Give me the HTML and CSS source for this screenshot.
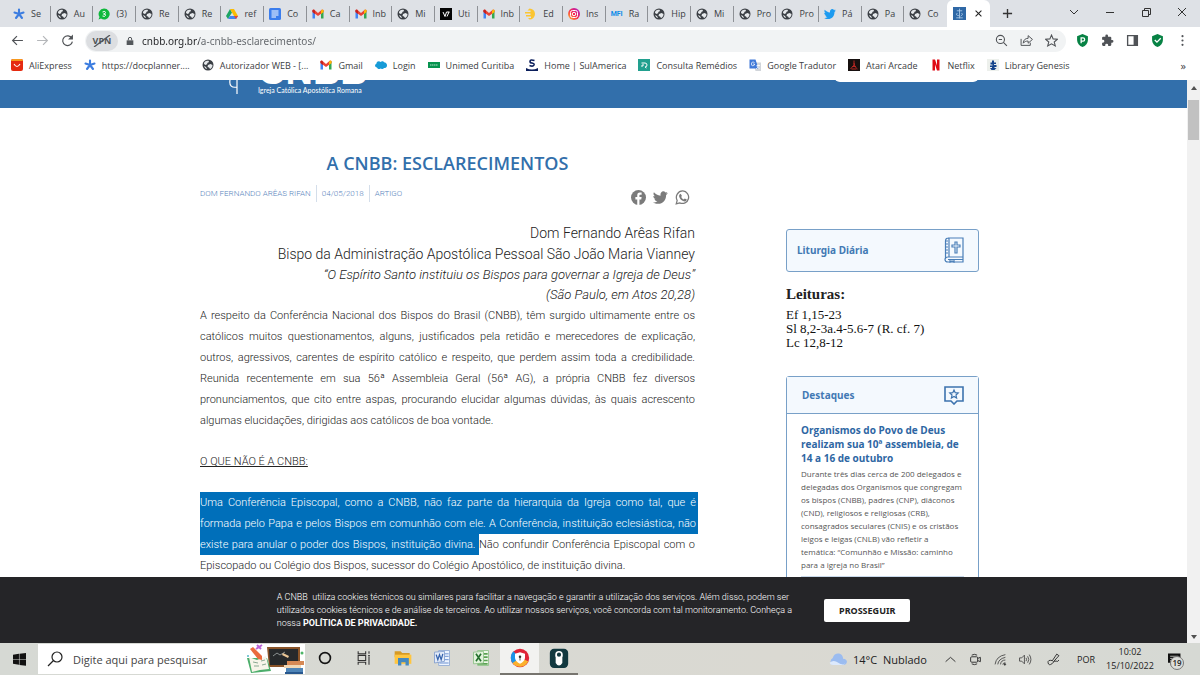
FILE: index.html
```html
<!DOCTYPE html>
<html lang="pt-BR">
<head>
<meta charset="utf-8">
<meta name="viewport" content="width=device-width, initial-scale=1">
<title>A CNBB: Esclarecimentos</title>
<link rel="stylesheet" href="styles.css">
</head>
<body>
<svg class="sprite" aria-hidden="true">
  <symbol id="doc" viewBox="0 0 24 24"><g stroke="#3c7de0" stroke-width="4.2" stroke-linecap="round"><path d="M12 12V3M12 12l9-3M12 12l6 8M12 12l-6 8M12 12L3 9"/></g></symbol>
  <symbol id="globe" viewBox="0 0 24 24"><circle cx="12" cy="12" r="11" fill="#3b3f45"/><path d="M6 5c3-1 4-2 8-1l-1 3-3 1 1 2-4 2-3-2c0-2 1-4 2-5zM12 12l5-2 4 2c0 4-2 7-5 8l-2-3-3-1zM4 14l4 2 2 4c-3 0-5-3-6-6z" fill="#e6e9ec"/></symbol>
  <symbol id="whats" viewBox="0 0 24 24"><path d="M12 1a11 11 0 1 1-6 20l-5 2 2-5A11 11 0 0 1 12 1z" fill="#0fb83c"/><path d="M9 8q6-3 6 1 0 3-4 3 5 0 4 3-1 3-6 1" fill="none" stroke="#fff" stroke-width="2"/></symbol>
  <symbol id="drive" viewBox="0 0 24 24"><path d="M8 2L0 16l4 6 8-13z" fill="#1da462"/><path d="M8 2h8l8 14h-8z" fill="#fbbc04"/><path d="M8 16h16l-4 6H4z" fill="#4285f4"/><path d="M20 22l4-6h-8z" fill="#ea4335"/></symbol>
  <symbol id="docs" viewBox="0 0 24 24"><rect width="24" height="24" rx="3" fill="#3b7ded"/><path d="M5 6h14M5 10h14M5 14h14M5 18h9" stroke="#fff" stroke-width="2"/></symbol>
  <symbol id="gmail" viewBox="0 0 24 24"><path d="M1 5v16h5V9z" fill="#4285f4"/><path d="M23 5v16h-5V9z" fill="#34a853"/><path d="M1 4l3-1 8 7 8-7 3 1v4l-11 8L1 8z" fill="#ea4335"/><path d="M18 6l2-3 3 1v4l-5 4z" fill="#fbbc04"/><path d="M1 8V4l3-1 2 3v6z" fill="#c5221f"/></symbol>
  <symbol id="vimg" viewBox="0 0 24 24"><path d="M0 0h24v24H0z" fill="#050505"/><path d="M6 8l4 9 3-9M14 17l4-9M13 8h6" stroke="#fff" stroke-width="2" fill="none"/></symbol>
  <symbol id="sun" viewBox="0 0 24 24"><path d="M9 1a11 11 0 1 1 0 22l-3-3h6v-3H2v-3h9v-3H0V8h11V5H5z" fill="#fbc531"/></symbol>
  <symbol id="insta" viewBox="0 0 24 24"><linearGradient id="ig" x1="0" y1="1" x2="1" y2="0"><stop offset="0" stop-color="#ffc833"/><stop offset=".5" stop-color="#f6264d"/><stop offset="1" stop-color="#a21be0"/></linearGradient><circle cx="12" cy="12" r="12" fill="url(#ig)"/><g fill="none" stroke="#fff" stroke-width="2"><rect x="5" y="5" width="14" height="14" rx="4"/><circle cx="12" cy="12" r="3.5"/></g></symbol>
  <symbol id="bird" viewBox="0 0 24 24"><path d="M24 5l-3 3c0 10-7 15-14 14-3 0-5-1-7-2 3 0 5-.5 7-2-2 0-4-1-4.500-3.500h2C2 14 .500 12 .500 9.500L3 10C1 8 0 6 1.500 3.500 4 6.500 7.500 8.500 12 9c-1-6 5-9 8-5l3-1-2 2.500z"/></symbol>
  <symbol id="cnbb" viewBox="0 0 24 24"><path d="M0 0h24v24H0z" fill="#2f68a6"/><path d="M12 3v18M7 7h10M8 11q-4 5 3 5M16 11q4 3-2 6M6 20h12" fill="none" stroke="#b3d0ed" stroke-width="1.500"/></symbol>
  <symbol id="x" viewBox="0 0 12 12"><path d="M1 1l10 10M11 1L1 11" stroke="currentColor" stroke-width="1.800" fill="none"/></symbol>
  <symbol id="fw" viewBox="0 0 24 24"><path d="M2 12h19M13 4l8 8-8 8" fill="none" stroke="currentColor" stroke-width="2.200"/></symbol>
  <symbol id="shield" viewBox="0 0 24 24"><path d="M12 0l10 4v7c0 6-4 11-10 13C6 22 2 17 2 11V4z" fill="#078244"/></symbol>
</svg>

<div class="desktop">
  <div class="tabbar">
    <div class="tabs">
      <div class="tab"><svg><use href="#doc"/></svg><span>Se</span></div>
      <div class="tab"><svg><use href="#globe"/></svg><span>Au</span></div>
      <div class="tab"><svg><use href="#whats"/></svg><span>(3)</span></div>
      <div class="tab"><svg><use href="#globe"/></svg><span>Re</span></div>
      <div class="tab"><svg><use href="#globe"/></svg><span>Re</span></div>
      <div class="tab"><svg><use href="#drive"/></svg><span>ref</span></div>
      <div class="tab"><svg><use href="#docs"/></svg><span>Co</span></div>
      <div class="tab"><svg><use href="#gmail"/></svg><span>Ca</span></div>
      <div class="tab"><svg><use href="#gmail"/></svg><span>Inb</span></div>
      <div class="tab"><svg><use href="#globe"/></svg><span>Mi</span></div>
      <div class="tab"><svg><use href="#vimg"/></svg><span>Uti</span></div>
      <div class="tab"><svg><use href="#gmail"/></svg><span>Inb</span></div>
      <div class="tab"><svg><use href="#sun"/></svg><span>Ed</span></div>
      <div class="tab"><svg><use href="#insta"/></svg><span>Ins</span></div>
      <div class="tab"><b class="mfi">MFI</b><span>Ra</span></div>
      <div class="tab"><svg><use href="#globe"/></svg><span>Hip</span></div>
      <div class="tab"><svg><use href="#globe"/></svg><span>Mi</span></div>
      <div class="tab"><svg><use href="#globe"/></svg><span>Pro</span></div>
      <div class="tab"><svg><use href="#globe"/></svg><span>Pro</span></div>
      <div class="tab"><svg fill="#1d9bf0"><use href="#bird"/></svg><span>Pá</span></div>
      <div class="tab"><svg><use href="#globe"/></svg><span>Pa</span></div>
      <div class="tab"><svg><use href="#globe"/></svg><span>Co</span></div>
    </div>
    <div class="tab-active"><svg><use href="#cnbb"/></svg><button class="close" aria-label="Fechar aba"><svg><use href="#x"/></svg></button></div>
    <button class="newtab" aria-label="Nova aba"><svg viewBox="0 0 12 12"><path d="M6 1v10M1 6h10" stroke="#333" stroke-width="1.500"/></svg></button>
    <div class="winctl">
      <button aria-label="Pesquisar abas"><svg viewBox="0 0 12 12"><path d="M2 4l4 4 4-4" fill="none" stroke="#333"/></svg></button>
      <button aria-label="Minimizar"><svg viewBox="0 0 12 12"><path d="M2 6.500h8" stroke="#333"/></svg></button>
      <button aria-label="Restaurar"><svg viewBox="0 0 12 12"><path d="M2.500 4.500h6v6h-6zM4.500 4.500v-2h6v6h-2" fill="none" stroke="#333"/></svg></button>
      <button aria-label="Fechar"><svg viewBox="0 0 12 12"><path d="M2 2l8 8M10 2l-8 8" stroke="#333"/></svg></button>
    </div>
  </div>

  <div class="toolbar">
    <button class="tool" aria-label="Voltar"><svg class="flip"><use href="#fw"/></svg></button>
    <button class="tool dim" aria-label="Avançar"><svg><use href="#fw"/></svg></button>
    <button class="tool" aria-label="Recarregar"><svg viewBox="0 0 24 24"><path d="M20 8a9 9 0 1 0 1 6" fill="none" stroke="currentColor" stroke-width="2.200"/><path d="M22 1v9h-9z" fill="currentColor"/></svg></button>
    <div class="address">
      <span class="vpn">VPN<svg viewBox="0 0 24 12"><path d="M4 12L20 0" stroke="#55585c" stroke-width="1.300"/></svg></span>
      <svg class="lock" viewBox="0 0 12 14"><path d="M1 6h10v7H1z" fill="#54585c"/><path d="M3.500 6V4a2.500 2.500 0 0 1 5 0v2" fill="none" stroke="#54585c" stroke-width="1.500"/></svg>
      <input class="url" aria-label="Endereço" value="cnbb.org.br/a-cnbb-esclarecimentos/">
      <button class="tool" aria-label="Zoom"><svg viewBox="0 0 24 24" fill="none" stroke="currentColor" stroke-width="2"><circle cx="10" cy="10" r="7.500"/><path d="M15.500 15.500L22 22M7 10h6"/></svg></button>
      <button class="tool" aria-label="Compartilhar"><svg viewBox="0 0 24 24" fill="none" stroke="currentColor" stroke-width="1.800"><path d="M2 9v12h17v-5M6 17c0-6 4-9 9-9V3l8 7-8 7v-4c-4 0-7 1-9 4z"/></svg></button>
      <button class="tool" aria-label="Favorito"><svg viewBox="0 0 24 24"><path d="M12 2l3 7 8 .7-6 5 2 7.300-7-4-7 4 2-7.300-6-5L9 9z" fill="none" stroke="currentColor" stroke-width="2"/></svg></button>
    </div>
    <button class="tool" aria-label="Extensão P"><svg viewBox="0 0 24 24"><use href="#shield"/><path d="M9.500 17V7h3.500a3 3 0 0 1 0 6H10" fill="none" stroke="#fff" stroke-width="2.400"/></svg></button>
    <button class="tool" aria-label="Extensões"><svg viewBox="0 0 24 24"><path d="M20.500 11H19V7a2 2 0 0 0-2-2h-4V3.500a2.500 2.500 0 0 0-5 0V5H4a2 2 0 0 0-2 2v3.800h1.500a2.700 2.700 0 0 1 0 5.400H2V20a2 2 0 0 0 2 2h3.800v-1.500a2.700 2.700 0 0 1 5.400 0V22H17a2 2 0 0 0 2-2v-4h1.500a2.500 2.500 0 0 0 0-5z" fill="currentColor"/></svg></button>
    <button class="tool" aria-label="Painel lateral"><svg viewBox="0 0 24 24"><path d="M3 3h18v18H3z" fill="none" stroke="currentColor" stroke-width="2.500"/><path d="M14 3h8v18h-8z" fill="currentColor"/></svg></button>
    <button class="tool" aria-label="Proteção"><svg viewBox="0 0 24 24"><use href="#shield"/><path d="M7 11l4 4 7-7" fill="none" stroke="#fff" stroke-width="2.500"/></svg></button>
    <button class="tool" aria-label="Menu"><svg viewBox="0 0 24 24" fill="currentColor"><circle cx="12" cy="4" r="2"/><circle cx="12" cy="12" r="2"/><circle cx="12" cy="20" r="2"/></svg></button>
  </div>

  <nav class="bookmarks" aria-label="Favoritos">
    <a href="#"><svg viewBox="0 0 24 24"><rect width="24" height="24" rx="4" fill="#e52b10"/><path d="M0 4q0-4 4-4h16q4 0 4 4z" fill="#f79a1e"/><path d="M6 10q6 10 12 0" fill="none" stroke="#fff" stroke-width="2.200"/></svg>AliExpress</a>
    <a href="#"><svg><use href="#doc"/></svg>https://docplanner....</a>
    <a href="#"><svg><use href="#globe"/></svg>Autorizador WEB - [...</a>
    <a href="#"><svg><use href="#gmail"/></svg>Gmail</a>
    <a href="#"><svg viewBox="0 0 24 24"><path d="M3 9c0-4 5-6 8-3 3-3 7-1 8 1 4 0 5 4 5 6 0 4-3 5-6 5-2 3-6 2-7 1-3 2-6 1-7-2-5-1-5-6-1-8z" fill="#179bd7"/></svg>Login</a>
    <a href="#"><svg viewBox="0 0 24 24"><path d="M0 6h24v12H0z" fill="#07934f"/><path d="M4 12h16" stroke="#b5dfc9" stroke-width="2" stroke-dasharray="3 1"/></svg>Unimed Curitiba</a>
    <a href="#"><svg viewBox="0 0 24 24"><path d="M17 3q-9-3-9 2 0 3 4 3 5 1 4 4-2 4-9 1" fill="none" stroke="#0b1e5b" stroke-width="3.200"/><path d="M0 18q12 6 24 0v6H0z" fill="#0b1e5b"/></svg>Home | SulAmerica</a>
    <a href="#"><svg viewBox="0 0 24 24"><path d="M0 0h24v24H0z" fill="#22a08f"/><path d="M7 8h7q4 0 4 4t-4 4l3 2M12 12H8v4" fill="none" stroke="#fff" stroke-width="2"/></svg>Consulta Remédios</a>
    <a href="#"><svg viewBox="0 0 24 24"><path d="M9 7h15v17H13z" fill="#d1d5da"/><path d="M1 1h12l6 18H1z" fill="#4079d8"/><path d="M11 7q-6-3-6 3t6 2v-2H8M15 13h7M18 11v2q0 5-4 7M16 15l5 5" fill="none" stroke="#fff" stroke-width="1.500"/></svg>Google Tradutor</a>
    <a href="#"><svg viewBox="0 0 24 24"><path d="M0 0h24v24H0z" fill="#17100f"/><path d="M12 3v9L5 20M12 8q0 8 7 12M8 15h8M7 20h10" fill="none" stroke="#b52622" stroke-width="2"/></svg>Atari Arcade</a>
    <a href="#"><svg viewBox="0 0 24 24"><path d="M5 1h5l4 12V1h5v22h-5l-4-12v12H5z" fill="#df0914"/></svg>Netflix</a>
    <a href="#"><svg viewBox="0 0 24 24"><path d="M0 0h24v24H0z" fill="#edf0ec"/><path d="M10 3h4v4h4v3h-4v2h5v4h-4v2h4l-4 4H9l-3-4h4v-2H6v-3h5v-2H7V7h3z" fill="#17458c"/></svg>Library Genesis</a>
    <button class="more" aria-label="Mais favoritos">»</button>
  </nav>

  <div class="viewport">
    <div class="page">
      <header class="site-head">
        <div class="wrap head-row">
          <svg class="crosier" viewBox="0 0 12 16"><path d="M2 0c-1 6 2 8 7 7M9 0v14" fill="none" stroke="#fff" stroke-width="1.200"/></svg>
          <div class="brand"><strong>CNBB</strong><span>Igreja Católica Apostólica Romana</span></div>
          <span class="searchpill"></span>
        </div>
      </header>
      <div class="wrap columns">
        <main>
          <h1>A CNBB: ESCLARECIMENTOS</h1>
          <div class="meta">
            <ul><li>DOM FERNANDO ARÊAS RIFAN</li><li>04/05/2018</li><li>ARTIGO</li></ul>
            <div class="share">
              <a href="#" aria-label="Facebook"><svg viewBox="0 0 24 24"><circle cx="12" cy="12" r="12"/><path d="M10 24v-9H7v-4h3V8.500C10 5 12 4 14 4h3v3.500h-2c-1.300 0-1.500.7-1.500 1.500v2H17l-.6 4h-2.900v9z" fill="#fff"/></svg></a>
              <a href="#" aria-label="Twitter"><svg viewBox="0 0 24 24"><use href="#bird"/></svg></a>
              <a href="#" aria-label="WhatsApp"><svg viewBox="0 0 24 24"><path d="M12.500 1.500a10 10 0 1 1-5 19L2 22l1.500-5.300a10.200 10.200 0 0 1 9-15.200z" fill="none" stroke="#7b7b7b" stroke-width="2"/><path d="M9 6l2 3-1 2q1 3 4 4l1.500-1.500L19 15q-1 4-5 3-6-2-7.500-8Q6 7 9 6z"/></svg></a>
            </div>
          </div>
          <div class="byline">
            <p>Dom Fernando Arêas Rifan</p>
            <p>Bispo da Administração Apostólica Pessoal São João Maria Vianney</p>
            <p class="quote">“O Espírito Santo instituiu os Bispos para governar a Igreja de Deus”</p>
            <p class="quote">(São Paulo, em Atos 20,28)</p>
          </div>
          <p class="text">
            <span class="line">A respeito da Conferência Nacional dos Bispos do Brasil (CNBB), têm surgido ultimamente entre os</span>
            <span class="line">católicos muitos questionamentos, alguns, justificados pela retidão e merecedores de explicação,</span>
            <span class="line">outros, agressivos, carentes de espírito católico e respeito, que perdem assim toda a credibilidade.</span>
            <span class="line">Reunida recentemente em sua 56ª Assembleia Geral (56ª AG), a própria CNBB fez diversos</span>
            <span class="line">pronunciamentos, que cito entre aspas, procurando elucidar algumas dúvidas, às quais acrescento</span>
            <span class="line end">algumas elucidações, dirigidas aos católicos de boa vontade.</span>
          </p>
          <p class="text"><u>O QUE NÃO É A CNBB:</u></p>
          <p class="text">
            <span class="line sel">Uma Conferência Episcopal, como a CNBB, não faz parte da hierarquia da Igreja como tal, que é</span>
            <span class="line sel">formada pelo Papa e pelos Bispos em comunhão com ele. A Conferência, instituição eclesiástica, não</span>
            <span class="line"><mark>existe para anular o poder dos Bispos, instituição divina. </mark>Não confundir Conferência Episcopal com o</span>
            <span class="line end">Episcopado ou Colégio dos Bispos, sucessor do Colégio Apostólico, de instituição divina.</span>
          </p>
        </main>
        <aside>
          <div class="liturgy"><h2>Liturgia Diária</h2>
            <svg viewBox="0 0 20 26" fill="none" stroke="#4a7fb8" stroke-width="1.200"><path d="M4 1h15v19H4c-4 0-4 5 0 5h15v-5M1.500 22V4q0-3 3-3M5 1v19M4 22.500h15"/><path d="M2 4h2M2 7h2M2 10h2M2 13h2M2 16h2"/><path d="M11 5h2v3h3v2h-3v6h-2v-6H8V8h3zM6 22v3l2-1 2 1v-3"/></svg>
          </div>
          <h3 class="readings-title">Leituras:</h3>
          <ul class="readings"><li>Ef 1,15-23</li><li>Sl 8,2-3a.4-5.6-7 (R. cf. 7)</li><li>Lc 12,8-12</li></ul>
          <section class="news">
            <div class="news-head"><h2>Destaques</h2>
              <svg viewBox="0 0 20 20" fill="none" stroke="#3d73ae" stroke-width="1.600"><path d="M1 2h18v14h-6l-3 3-3-3H1z"/><path d="M10 5l1.200 2.700 3 .3-2.200 2 .6 3-2.600-1.500L7.400 13l.6-3-2.200-2 3-.3z" stroke-width="1.200"/></svg>
            </div>
            <article>
              <h3><a href="#">Organismos do Povo de Deus<br>realizam sua 10ª assembleia, de<br>14 a 16 de outubro</a></h3>
              <p>Durante três dias cerca de 200 delegados e<br>delegadas dos Organismos que congregam<br>os bispos (CNBB), padres (CNP), diáconos<br>(CND), religiosos e religiosas (CRB),<br>consagrados seculares (CNIS) e os cristãos<br>leigos e leigas (CNLB) vão refletir a<br>temática: “Comunhão e Missão: caminho<br>para a igreja no Brasil”</p>
            </article>
          </section>
        </aside>
      </div>
      <div class="cookies">
        <p>A CNBB&nbsp; utiliza cookies técnicos ou similares para facilitar a navegação e garantir a utilização dos serviços. Além disso, podem ser<br>utilizados cookies técnicos e de análise de terceiros. Ao utilizar nossos serviços, você concorda com tal monitoramento. Conheça a<br>nossa <a href="#">POLÍTICA DE PRIVACIDADE.</a></p>
        <button>PROSSEGUIR</button>
      </div>
    </div>
    <div class="scrollbar"><i class="up"></i><i class="thumb"></i><i class="down"></i></div>
  </div>

  <footer class="taskbar">
    <button class="start" aria-label="Iniciar"><svg viewBox="0 0 24 24"><path d="M0 3l11-1.500V11H0zM12 1.500L24 0v11H12zM0 12h11v9.500L0 20zM12 12h12v11.500L12 22z" fill="#111"/></svg></button>
    <label class="search">
      <svg class="glass" viewBox="0 0 16 16"><circle cx="10" cy="6" r="5" fill="none" stroke="#222" stroke-width="1.200"/><path d="M6.500 9.500L1 15" stroke="#222" stroke-width="1.200"/></svg>
      <input aria-label="Pesquisar" placeholder="Digite aqui para pesquisar">
      <svg class="art" viewBox="0 0 58 30"><path d="M20 3h33v20H22z" fill="#8a5428"/><path d="M22 5h29v16H23z" fill="#26292b"/><path d="M26 12l4-3 3 2 5-3" stroke="#8b9191" fill="none"/><path d="M36 9l6 3-1 2-6-3z" fill="#e9c595"/><path d="M10 1l4 4M15 1l-6 4" stroke="#bb62d4" stroke-width="2"/><path d="M0 14l20 0 4 13-20 2z" fill="#4cae6b"/><path d="M2 13l8 3 9-4 3 13-9 1-8 2z" fill="#f7f4e9"/><path d="M6 18l5 1M7 22l5 0M14 17l4-1M15 21l4-1" stroke="#8ba993"/><path d="M3 5l3-2 9 9 0 4-4-1z" fill="#ea6a3d"/><path d="M40 17h17v4H40z" fill="#d68955"/><path d="M37 21h17v3H37z" fill="#f0d7b5"/><path d="M39 24h17v4H39z" fill="#4e84b7"/><path d="M38 28h18v2H38z" fill="#28578e"/><circle cx="55" cy="9" r="1.500" fill="#4db567"/><circle cx="1" cy="12" r="1" fill="#55b6c8"/></svg>
    </label>
    <div class="apps">
      <button aria-label="Cortana"><svg viewBox="0 0 24 24"><circle cx="12" cy="12" r="6.500" fill="none" stroke="#151515" stroke-width="2"/></svg></button>
      <button aria-label="Visão de tarefas"><svg viewBox="0 0 24 24" fill="none" stroke="#333" stroke-width="1.300"><path d="M5 4v3h9V4M5 20v-3h9v3M5 9h9v6H5zM18 4v3M18 10v10M17 9h2"/></svg></button>
      <button aria-label="Explorador de Arquivos"><svg viewBox="0 0 24 24"><path d="M2 4h7l2 2h9v5H2z" fill="#d79a24"/><path d="M2 8h20v11H2z" fill="#ffc640"/><path d="M6 12h13v9h-4v-4h-5v4H6z" fill="#4689bf"/></svg></button>
      <button aria-label="Word"><svg viewBox="0 0 24 24"><path d="M8 3h13v18H8z" fill="#edf4ff" stroke="#8ea8d3"/><path d="M15 7h5M15 10h5M8 14h12M9 18h11" stroke="#5580c8"/><path d="M3 5l12-1v12L3 18z" fill="#e3ebf8" stroke="#7f9cce"/><path d="M5 8l2 6 2-6 2 6 2-7" fill="none" stroke="#3563ad" stroke-width="1.500"/></svg></button>
      <button aria-label="Excel"><svg viewBox="0 0 24 24"><path d="M8 3h13v18H8z" fill="#edf8e9" stroke="#8dc087"/><path d="M15 7h5M15 11h5M15 15h5M8 19h12" stroke="#5ba253" stroke-width="2"/><path d="M3 5l12-1v14L3 19z" fill="#e2f3dc" stroke="#8dc087"/><path d="M6 7l6 9M12 7l-6 9" stroke="#26712e" stroke-width="2"/></svg></button>
      <button class="on" aria-label="Navegador"><svg viewBox="0 0 24 24"><circle cx="12" cy="12" r="11" fill="#df2438"/><path d="M12 12L4 4a11 11 0 0 0-1 14l5 3z" fill="#1b94e8"/><path d="M3 18a11 11 0 0 0 19-2l-10-4z" fill="#fbb12d"/><path d="M6 7l6-2 6 2v4c0 4-3 6-6 8-3-2-6-4-6-8z" fill="#fff"/><circle cx="12" cy="10.500" r="1.500" fill="#333"/><path d="M12 11v4" stroke="#333"/></svg></button>
      <button class="open" aria-label="Gerenciador"><svg viewBox="0 0 24 24"><rect x="1" y="1" width="22" height="23" rx="5" fill="#123940"/><path d="M8 8v10q4 6 8 0V8z" fill="#fff"/><circle cx="12" cy="8" r="3.500" fill="#123940" stroke="#fff" stroke-width="2"/></svg></button>
    </div>
    <div class="tray">
      <button class="weather"><svg viewBox="0 0 24 18"><path d="M6 16a5 5 0 0 1 0-9c2-8 13-7 13 1 7 0 6 8 0 8z" fill="#9bbcf0"/><path d="M2 13q5-4 11 0t9 0q-1 3-5 3H6q-3 0-4-3z" fill="#dce9fc"/></svg>14°C&nbsp; Nublado</button>
      <button aria-label="Ícones ocultos"><svg viewBox="0 0 24 24"><path d="M3 16l9-8 9 8" fill="none" stroke="#333" stroke-width="1.800"/></svg></button>
      <button aria-label="Reunir"><svg viewBox="0 0 24 24" fill="none" stroke="#333" stroke-width="1.800"><rect x="3" y="7" width="13" height="10" rx="2"/><path d="M16 10l5-2v8l-5-2M5 4q5-3 10 0M5 20q5 3 10 0"/></svg></button>
      <button aria-label="Rede"><svg viewBox="0 0 24 24" fill="none" stroke="#444" stroke-width="1.600"><path d="M2 21Q4 6 21 3M7 21Q8 11 21 8M12 21q1-8 9-8M16 21q1-3 5-3"/><circle cx="20" cy="21" r="1.500" fill="#222"/></svg></button>
      <button aria-label="Volume"><svg viewBox="0 0 24 24" fill="none" stroke="#444" stroke-width="1.600"><path d="M1 9h4l5-5v16l-5-5H1zM13 9q2 3 0 6M16 6q4 6 0 12M19 3q6 9 0 18"/></svg></button>
      <button class="pen" aria-label="Caneta"><svg viewBox="0 0 24 24" fill="none" stroke="#333" stroke-width="1.800"><path d="M10 14l8-12 4 3-10 11zM10 14q-9-2-8 4t7 2q5-7 8-5t5-2"/></svg></button>
      <button class="lang">POR</button>
      <button class="clock">10:02<br>15/10/2022</button>
      <button class="notes" aria-label="19 notificações"><svg viewBox="0 0 24 24"><path d="M0 1h23v17H10l-5 5v-5H0z" fill="#111"/><path d="M4 6h15M4 10h15M4 14h10" stroke="#d8d9d3" stroke-width="1.500"/></svg><span>19</span></button>
    </div>
  </footer>
</div>
</body>
</html>
```
FILE: styles.css
```css
* { box-sizing: border-box; }
body { margin: 0; font-family: "Open Sans", "Noto Sans", sans-serif; color: #3c4043; background: #fff; }
h1, h2, h3, p, ul { margin: 0; padding: 0; }
ul { list-style: none; }
button { border: 0; padding: 0; background: none; color: inherit; font: inherit; }
input { border: 0; padding: 0; background: none; outline: 0; font: inherit; min-width: 0; }
a { color: inherit; text-decoration: none; }
svg { display: block; flex: none; }
.sprite { position: absolute; width: 0; height: 0; }
.desktop { height: 100vh; display: flex; flex-direction: column; overflow: hidden; }

/* Tabs */
.tabbar { height: 27px; flex: none; display: flex; background: #dee1e6; padding-left: 8px; }
.tabs { flex: 0 1 939px; display: flex; align-items: center; min-width: 0; }
.tab { flex: 1 1 0; min-width: 0; height: 16px; display: flex; align-items: center; gap: 6px; padding-left: 5px; border-right: 1px solid #8e9196; font-size: 9px; white-space: nowrap; }
.tab:last-child { border-right-color: transparent; }
.tab svg { width: 12px; height: 12px; }
.mfi { flex: none; width: 12px; font: bold 7px Roboto, sans-serif; color: #0c8ce9; }
.tab-active { flex: none; width: 43px; display: flex; align-items: center; gap: 9px; padding-left: 6px; background: #fff; border-radius: 6px 6px 0 0; }
.tab-active > svg { width: 13px; height: 13px; }
.close svg { width: 7px; height: 7px; color: #222; }
.newtab { width: 34px; display: grid; place-items: center; }
.newtab svg { width: 11px; height: 11px; }
.winctl { margin-left: auto; display: flex; height: 24px; }
.winctl button { width: 36px; display: grid; place-items: center; }
.winctl svg { width: 12px; height: 12px; }

/* Toolbar */
.toolbar { height: 27px; flex: none; display: flex; align-items: center; padding: 0 5px; }
.tool { width: 25px; height: 22px; display: grid; place-items: center; color: #505357; }
.tool svg { width: 13px; height: 13px; }
.dim { color: #b5b7ba; }
.flip { transform: scaleX(-1); }
.address { flex: 1; height: 22px; margin: 0 4px 0 5px; padding-right: 2px; display: flex; align-items: center; background: #f1f3f4; border-radius: 11px; }
.vpn { position: relative; width: 32px; height: 20px; margin-left: 1px; border-radius: 10px; background: #dcdee1; color: #505357; font: bold 9px/20px "Open Sans", sans-serif; text-align: center; }
.vpn svg { position: absolute; inset: 4px 4px; width: 24px; height: 12px; }
.lock { width: 8px; height: 10px; margin: 0 8px; }
.url { flex: 1; font: 10px/20px "Noto Sans", sans-serif; background: linear-gradient(90deg, #202124 57px, #5f6368 57px) text; -webkit-background-clip: text; background-clip: text; -webkit-text-fill-color: transparent; }

/* Bookmarks */
.bookmarks { height: 26px; flex: none; display: flex; align-items: center; gap: 12px; padding: 0 14px 4px 11px; font-size: 9px; white-space: nowrap; }
.bookmarks a { display: flex; align-items: center; gap: 6px; }
.bookmarks svg { width: 12px; height: 12px; }
.more { margin-left: auto; font-size: 11px; }

/* Page */
.viewport { flex: 1; min-height: 0; display: flex; }
.page { position: relative; flex: 1; min-width: 0; overflow: hidden; }
.wrap { max-width: 787px; margin: 0 auto; padding-right: 8px; }
.site-head { height: 28px; background: #326fab; overflow: hidden; }
.head-row { display: flex; align-items: flex-start; color: #fff; }
.crosier { width: 12px; height: 16px; margin-left: 28px; }
.brand { margin: -27px 0 0 18px; font-family: Lato, sans-serif; }
.brand strong { display: block; font: bold 38px/36px "Liberation Sans", sans-serif; }
.brand span { display: block; font-size: 7px; line-height: 8px; margin-top: -3px; }
.searchpill { width: 145px; height: 12px; margin: -10px 0 0 auto; border-radius: 12px; background: #fff; }
.columns { display: flex; justify-content: space-between; }
main { width: 495px; padding-top: 44px; }
h1 { font-size: 18px; line-height: 22px; font-weight: 600; text-align: center; color: #326fab; }
.meta { display: flex; justify-content: space-between; margin-top: 11px; height: 38px; }
.meta ul { display: flex; height: 17px; font: 300 8px/17px Roboto, sans-serif; color: #5b86bd; }
.meta li + li { margin-left: 5px; padding-left: 5px; border-left: 1px solid #d4deea; }
.share { display: flex; gap: 7px; padding: 5px 5px 0 0; fill: #7b7b7b; }
.share svg { width: 15px; height: 15px; }
.byline { font: 300 14px/21px Roboto, sans-serif; text-align: right; color: #222; white-space: nowrap; }
.quote { font-size: 13px; line-height: 20px; font-style: italic; }
.text { font: 300 11px/21px Roboto, sans-serif; color: #222; margin-bottom: 20px; white-space: nowrap; }
.line { display: block; text-align: justify; text-align-last: justify; white-space: normal; }
.end { text-align-last: left; }
.sel { background: #006fba; color: #fff; margin-right: -3px; padding-right: 2px; }
mark { background: #006fba; color: #fff; padding: 4px 0; }

aside { width: 193px; padding-top: 121px; }
aside h2 { font: bold 10px/14px "Noto Sans", sans-serif; color: #4279b4; }
.liturgy { height: 43px; display: flex; align-items: center; justify-content: space-between; padding: 0 14px 2px 10px; border: 1px solid #78a0c8; border-radius: 3px; background: #f4f9fe; }
.liturgy svg { width: 20px; height: 26px; }
.readings-title { margin-top: 12px; font: bold 15px/20px "Liberation Serif", serif; color: #222; }
.readings { margin-top: 4px; font: 13px/14px "Liberation Serif", serif; color: #111; }
.news { margin-top: 26px; border: 1px solid #78a0c8; border-radius: 3px; height: 260px; }
.news-head { height: 37px; display: flex; align-items: center; justify-content: space-between; padding: 0 14px 0 15px; background: #f4f9fe; border-bottom: 1px solid #78a0c8; }
.news-head svg { width: 20px; height: 20px; }
.news article { margin: 0 14px; padding-top: 9px; border-bottom: 1px solid #c9d9ea; padding-bottom: 5px; white-space: nowrap; }
.news h3 { font-size: 10px; line-height: 14px; color: #2e66a3; }
.news p { margin-top: 2px; font: 8px/13px "Open Sans", sans-serif; color: #555; }

/* Cookie notice */
.cookies { position: absolute; left: 0; right: 0; bottom: 0; height: 66px; display: flex; align-items: center; justify-content: center; gap: 32px; background: #252528; color: #fff; }
.cookies p { font: 300 9px/13px Roboto, sans-serif; white-space: nowrap; }
.cookies a { font-weight: bold; color: #fff; }
.cookies button { width: 86px; height: 23px; border-radius: 2px; background: #fff; color: #222; font: bold 9px "Noto Sans", sans-serif; }

.scrollbar { width: 13px; flex: none; display: flex; flex-direction: column; align-items: center; background: #f1f1f1; padding: 6px 0 4px; }
.scrollbar i { border: 3px solid transparent; }
.scrollbar .up { border-bottom: 4px solid #505050; border-top: 0; }
.scrollbar .thumb { width: 11px; height: 40px; margin-top: 10px; border: 0; background: #c1c1c1; }
.scrollbar .down { margin-top: auto; border-top: 4px solid #505050; border-bottom: 0; }

/* Taskbar */
.taskbar { height: 32px; flex: none; display: flex; background: linear-gradient(90deg, #d6d9d4, #dad9d2 65%, #d6d9d4); color: #222; }
.start { width: 38px; display: grid; place-items: center; }
.start svg { width: 13px; height: 13px; }
.search { width: 267px; margin: 1px 0; display: flex; align-items: center; background: #fff; padding-left: 9px; }
.glass { width: 16px; height: 16px; }
.search input { flex: 1; margin-left: 10px; font-size: 11px; }
.search input::placeholder { color: #444; }
.art { width: 58px; height: 30px; }
.apps { display: flex; }
.apps button { width: 39px; display: grid; place-items: center; border-bottom: 2px solid transparent; }
.apps svg { width: 20px; height: 20px; }
.apps .on { background: #f2f2f0; border-color: #77756f; }
.apps .open { border-color: #77756f; }
.tray { margin-left: auto; display: flex; align-items: center; padding-right: 18px; }
.tray > button { width: 25px; display: grid; place-items: center; }
.tray svg { width: 13px; height: 13px; }
.tray .weather { width: 98px; display: flex; align-items: center; gap: 6px; margin-right: 12px; font-size: 11px; white-space: nowrap; }
.tray .weather svg { width: 19px; height: 15px; }
.tray .pen { width: 31px; }
.tray .lang { width: 34px; font-size: 9px; }
.tray .clock { width: 52px; display: block; margin: 0 10px 0 1px; font-size: 9px; line-height: 14px; text-align: center; }
.tray .notes { position: relative; width: 16px; }
.notes span { position: absolute; left: 4px; top: 3px; width: 14px; height: 14px; border: 1px solid #777; border-radius: 50%; background: #dddeda; font-size: 8px; font-weight: 600; line-height: 12px; text-align: center; }
```
